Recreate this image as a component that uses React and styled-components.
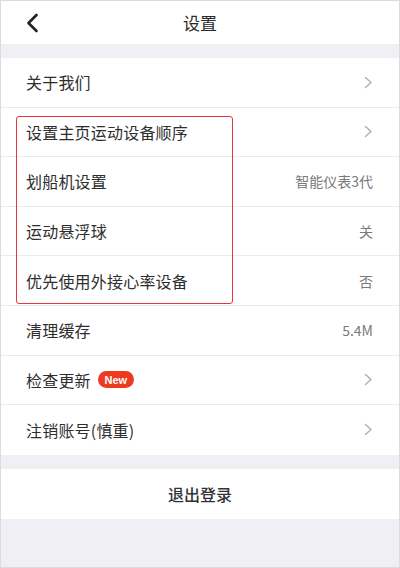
import React from "react";
import styled, { createGlobalStyle } from "styled-components";

const GlobalStyle = createGlobalStyle`
  html, body {
    margin: 0;
    padding: 0;
    background: #efeff4;
  }
  body {
    font-family: "Noto Sans CJK SC", "Noto Sans", sans-serif;
    color: #333;
  }
`;

const Page = styled.div`
  width: 400px;
  height: 568px;
  box-sizing: border-box;
  border: 1px solid #dcdcdc;
  background: #efeff4;
  overflow: hidden;
`;

const Header = styled.header`
  height: 43px;
  background: #fff;
  display: grid;
  grid-template-columns: 60px 1fr 60px;
  align-items: center;
`;

const BackButton = styled.button`
  border: 0;
  background: none;
  padding: 0 0 0 24px;
  height: 100%;
  display: flex;
  align-items: center;
  cursor: pointer;
`;

const Title = styled.h1`
  margin: 0;
  font-size: 17px;
  font-weight: 400;
  color: #2a2a2a;
  text-align: center;
`;

const Section = styled.section`
  background: #fff;
  margin-top: ${(p) => p.$gap}px;
`;

const Group = styled.div`
  position: relative;

  &::after {
    content: "";
    position: absolute;
    left: 15px;
    top: 8px;
    bottom: 2px;
    width: 215px;
    border: 1.5px solid #e8343c;
    border-radius: 3px;
    pointer-events: none;
  }
`;

const Row = styled.div`
  height: 49.6px;
  box-sizing: border-box;
  display: flex;
  align-items: center;
  padding: 0 26px 0 25px;
  border-bottom: ${(p) => (p.$last ? "none" : "1px solid #ebebeb")};
`;

const Label = styled.span`
  font-size: 16px;
  color: #2e2e2e;
  letter-spacing: 0.2px;
`;

const Value = styled.span`
  margin-left: auto;
  font-size: 14px;
  color: #7a7a7a;
`;

const Badge = styled.span`
  margin-left: 7px;
  width: 36px;
  height: 17px;
  border-radius: 9px;
  background: #ee3a1e;
  color: #fff;
  font-family: "Liberation Sans", Arial, sans-serif;
  font-size: 11px;
  font-weight: 700;
  display: flex;
  align-items: center;
  justify-content: center;
`;

const LogoutButton = styled.button`
  display: block;
  width: 100%;
  height: 50px;
  border: 0;
  background: #fff;
  margin-top: 14px;
  font-family: inherit;
  font-size: 16px;
  font-weight: 500;
  color: #333;
  cursor: pointer;
`;

const BackIcon = () => (
  <svg width="14" height="20" viewBox="0 0 14 20">
    <path d="M11.5 2 L3.5 10 L11.5 18" fill="none" stroke="#222" strokeWidth="2.6" strokeLinecap="round" strokeLinejoin="round" />
  </svg>
);

const Chevron = () => (
  <svg width="9" height="13" viewBox="0 0 9 13" style={{ marginLeft: "auto" }}>
    <path d="M1.5 1.5 L7 6.5 L1.5 11.5" fill="none" stroke="#b2b2b2" strokeWidth="1.5" strokeLinecap="round" strokeLinejoin="round" />
  </svg>
);

const SettingRow = ({ label, value, badge, arrow, last }) => (
  <Row $last={last}>
    <Label>{label}</Label>
    {badge && <Badge>{badge}</Badge>}
    {value && <Value>{value}</Value>}
    {arrow && <Chevron />}
  </Row>
);

export default function App() {
  return (
    <>
      <GlobalStyle />
      <Page>
        <Header>
          <BackButton aria-label="返回">
            <BackIcon />
          </BackButton>
          <Title>设置</Title>
          <span />
        </Header>

        <Section $gap={14}>
          <SettingRow label="关于我们" arrow />
          <Group>
            <SettingRow label="设置主页运动设备顺序" arrow />
            <SettingRow label="划船机设置" value="智能仪表3代" />
            <SettingRow label="运动悬浮球" value="关" />
            <SettingRow label="优先使用外接心率设备" value="否" />
          </Group>
          <SettingRow label="清理缓存" value="5.4M" />
          <SettingRow label="检查更新" badge="New" arrow />
          <SettingRow label="注销账号(慎重)" arrow last />
        </Section>

        <LogoutButton>退出登录</LogoutButton>
      </Page>
    </>
  );
}
